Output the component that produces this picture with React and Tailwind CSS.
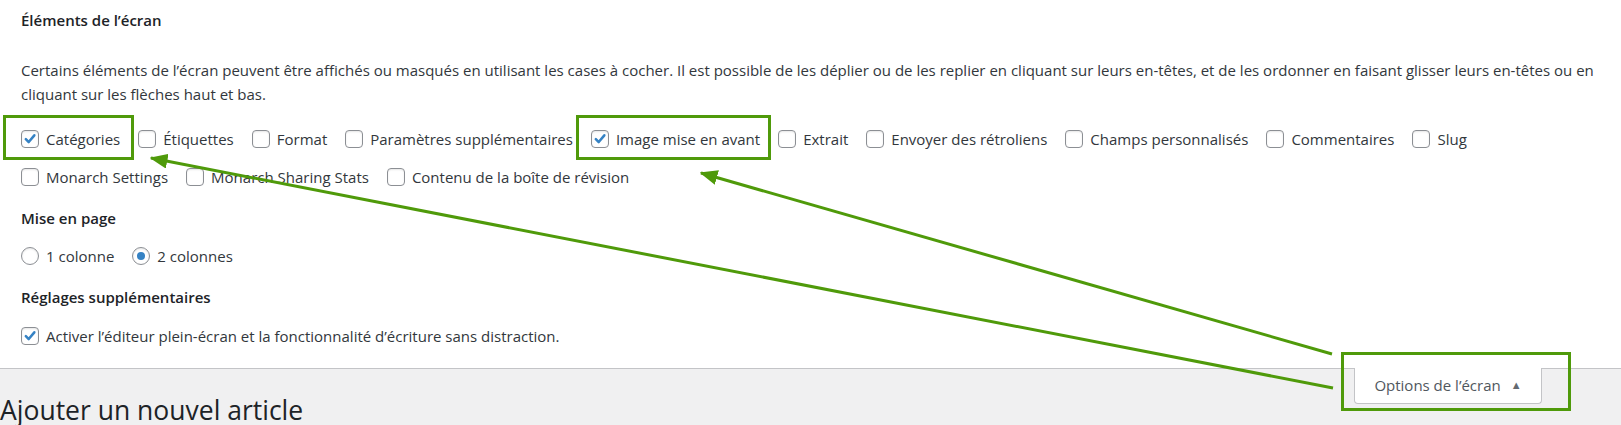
import React from 'react';

const font = { fontFamily: '"Open Sans", "Noto Sans", sans-serif' };

const Box = ({ checked }) => (
    <span className="inline-flex h-[18px] w-[18px] shrink-0 items-center justify-center rounded-[4px] border border-[#8c8f94] bg-white shadow-[inset_0_1px_2px_rgba(0,0,0,0.1)]">
        {checked && (
            <svg viewBox="0 0 20 20" className="h-[18px] w-[18px]">
                <path d="M4.8 10.2 L8.4 13.8 L15.4 5.4" fill="none" stroke="#3582c4" strokeWidth="3.2" strokeLinecap="round" strokeLinejoin="round" />
            </svg>
        )}
    </span>
);

const Radio = ({ checked }) => (
    <span className="inline-flex h-[18px] w-[18px] shrink-0 items-center justify-center rounded-full border border-[#8c8f94] bg-white shadow-[inset_0_1px_2px_rgba(0,0,0,0.1)]">
        {checked && <span className="h-[8px] w-[8px] rounded-full bg-[#3582c4]" />}
    </span>
);

const Item = ({ label, checked, radio }) => (
    <label className="flex items-center gap-[7px]">
        {radio ? <Radio checked={checked} /> : <Box checked={checked} />}
        <span>{label}</span>
    </label>
);

const row1 = [
    ['Catégories', true],
    ['Étiquettes', false],
    ['Format', false],
    ['Paramètres supplémentaires', false],
    ['Image mise en avant', true],
    ['Extrait', false],
    ['Envoyer des rétroliens', false],
    ['Champs personnalisés', false],
    ['Commentaires', false],
    ['Slug', false],
];

const row2 = [
    ['Monarch Settings', false],
    ['Monarch Sharing Stats', false],
    ['Contenu de la boîte de révision', false],
];

export default function App() {
    return (
        <div className="relative h-[425px] w-[1621px] overflow-hidden bg-white text-[15px] text-[#32373c]" style={font}>
            <div className="border-b border-[#c3c4c7] pb-[13px] pl-[21px] pt-[10px]">
                <h5 className="text-[15px] font-semibold leading-[20px] text-[#1d2327]">Éléments de l’écran</h5>
                <p className="mt-[28px] whitespace-nowrap leading-[24px]">
                    Certains éléments de l’écran peuvent être affichés ou masqués en utilisant les cases à cocher. Il est possible de les déplier ou de les replier en cliquant sur leurs en-têtes, et de les ordonner en faisant glisser leurs en-têtes ou en
                    <br />
                    cliquant sur les flèches haut et bas.
                </p>
                <div className="mt-[14px] flex h-[38px] items-center gap-[18px]">
                    {row1.map(([l, c]) => <Item key={l} label={l} checked={c} />)}
                </div>
                <div className="flex h-[38px] items-center gap-[18px]">
                    {row2.map(([l, c]) => <Item key={l} label={l} checked={c} />)}
                </div>
                <h5 className="mt-[12px] text-[15px] font-semibold leading-[20px] text-[#1d2327]">Mise en page</h5>
                <div className="mt-[9px] flex h-[38px] items-center gap-[18px]">
                    <Item label="1 colonne" radio />
                    <Item label="2 colonnes" radio checked />
                </div>
                <h5 className="mt-[12px] text-[15px] font-semibold leading-[20px] text-[#1d2327]">Réglages supplémentaires</h5>
                <div className="mt-[10px] flex h-[38px] items-center">
                    <Item label="Activer l’éditeur plein-écran et la fonctionnalité d’écriture sans distraction." checked />
                </div>
            </div>

            <div className="relative h-full bg-[#f0f0f1] pt-[25px]">
                <div className="absolute right-[79px] top-[-1px] flex h-[36px] w-[188px] items-center justify-center gap-[10px] rounded-b-[4px] border border-t-0 border-[#c3c4c7] bg-white text-[15px] text-[#50575e]">
                    <span>Options de l’écran</span>
                    <span className="text-[11px] text-[#646970]">▲</span>
                </div>
                <h1 className="text-[26.5px] font-normal leading-[32px] text-[#1d2327]">Ajouter un nouvel article</h1>
            </div>

            {/* annotations */}
            <svg className="pointer-events-none absolute left-0 top-0" width="1621" height="425">
                <defs>
                    <marker id="ah" markerWidth="6" markerHeight="5" refX="5.5" refY="2.5" orient="auto" markerUnits="strokeWidth">
                        <path d="M0 0 L6 2.5 L0 5 z" fill="#4f9a0a" />
                    </marker>
                </defs>
                <g fill="none" stroke="#4f9a0a" strokeWidth="3">
                    <rect x="4.5" y="116.5" width="128" height="42" />
                    <rect x="577.5" y="116.5" width="192" height="42" />
                    <rect x="1342.5" y="353.5" width="227" height="56" />
                    <line x1="1333" y1="388" x2="151" y2="158" markerEnd="url(#ah)" />
                    <line x1="1332" y1="354" x2="701" y2="173" markerEnd="url(#ah)" />
                </g>
            </svg>
        </div>
    );
}
